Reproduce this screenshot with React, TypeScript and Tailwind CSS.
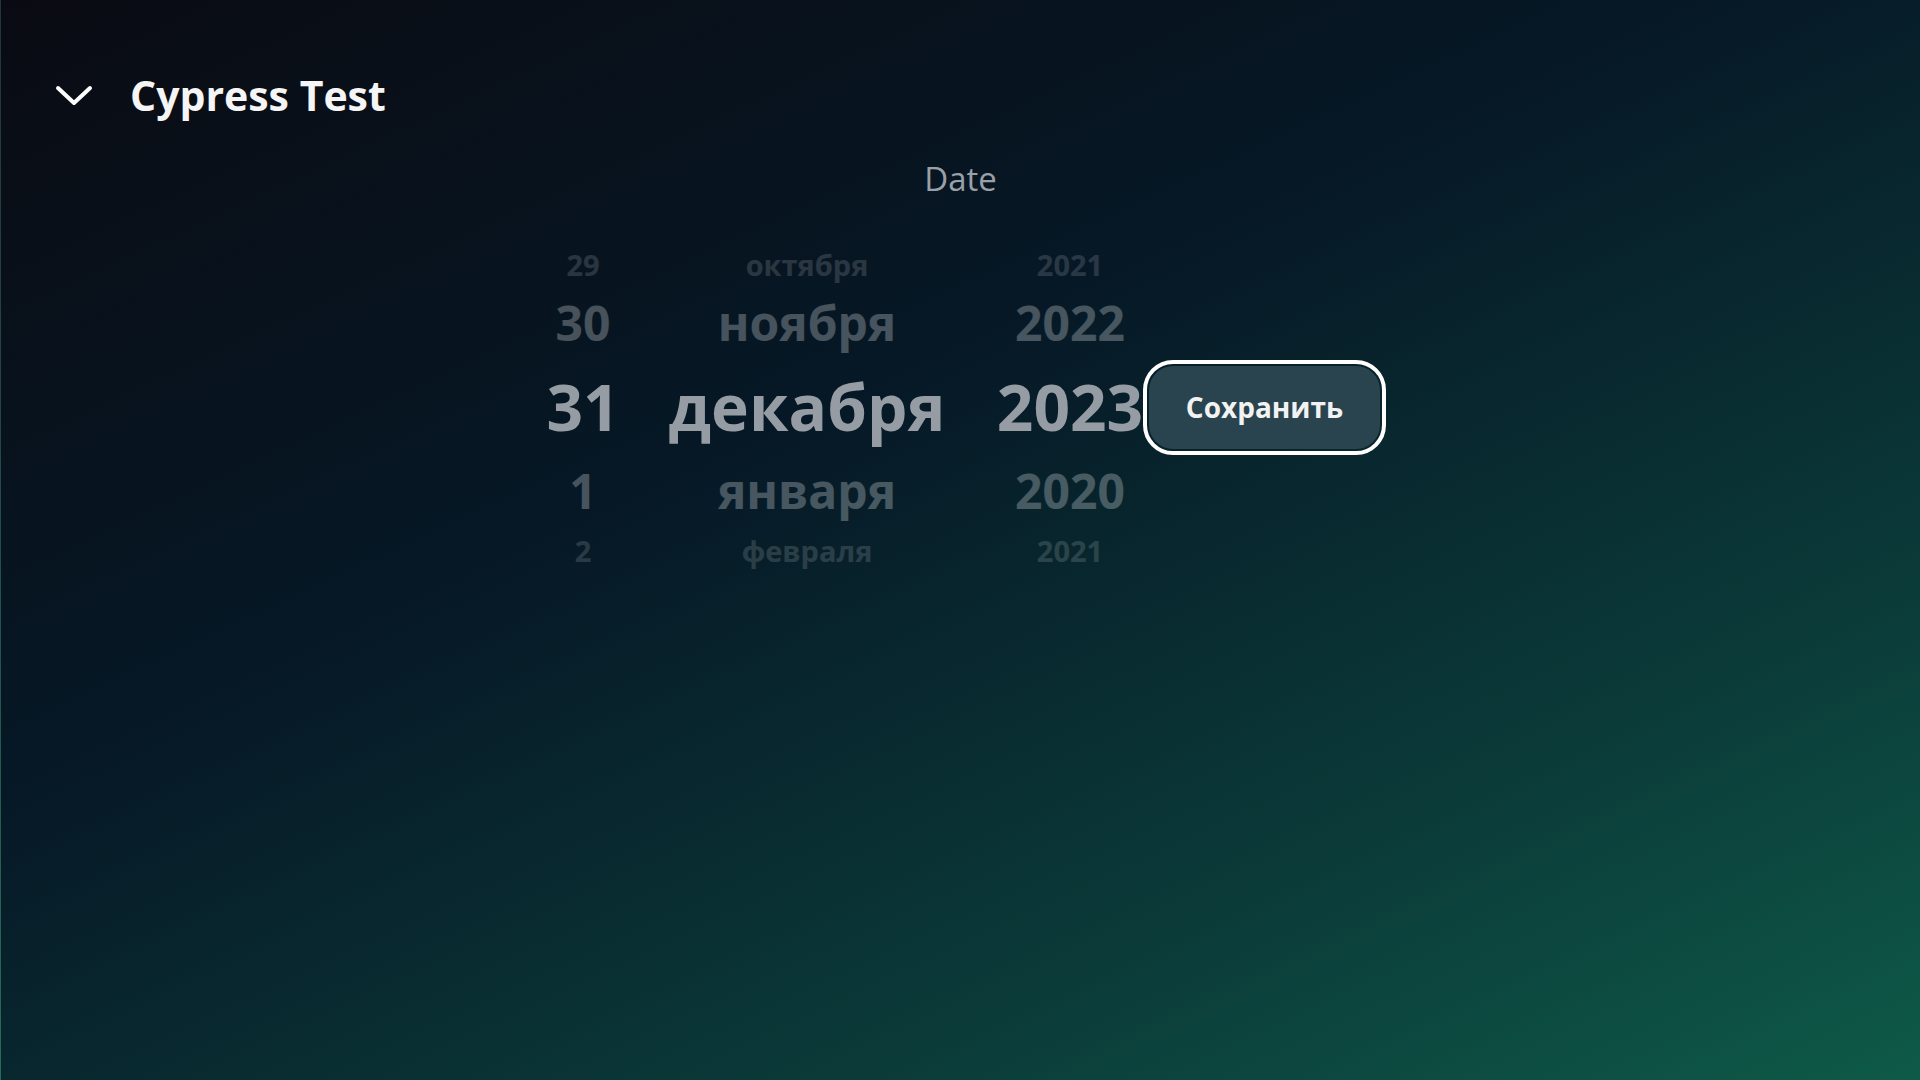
type Row = { day: string; month: string; year: string; tone: "far" | "near" | "active" };

const rows: Row[] = [
  { day: "29", month: "октября", year: "2021", tone: "far" },
  { day: "30", month: "ноября", year: "2022", tone: "near" },
  { day: "31", month: "декабря", year: "2023", tone: "active" },
  { day: "1", month: "января", year: "2020", tone: "near" },
  { day: "2", month: "февраля", year: "2021", tone: "far" },
];

const toneClass = {
  far: "h-[54px] text-[29px] text-white/[0.14]",
  near: "h-[64px] text-[48px] text-white/[0.26]",
  active: "h-[104px] text-[64px] text-[#959ca3]",
};

function PickerColumn({ field, width }: { field: "day" | "month" | "year"; width: string }) {
  return (
    <div className={`flex flex-col ${width}`}>
      {rows.map((row) => (
        <div
          key={row[field] + row.tone + row.month}
          className={`flex items-center justify-center font-bold leading-none whitespace-nowrap ${toneClass[row.tone]}`}
        >
          {row[field]}
        </div>
      ))}
    </div>
  );
}

export default function App() {
  return (
    <div className="min-h-screen w-full border-l border-white/10 bg-[linear-gradient(155deg,#0a0b12_0%,#061826_40%,#0b3b39_75%,#0e5a48_100%)] font-['Open_Sans',sans-serif] text-white">
      {/* Header */}
      <div className="flex items-center pt-[67px] pl-[40px]">
        <svg width="66" height="56" viewBox="0 0 66 56" fill="none" className="shrink-0">
          <polyline
            points="17,21 33,36 49,21"
            stroke="white"
            strokeWidth="4"
            strokeLinecap="round"
            strokeLinejoin="round"
          />
        </svg>
        <h1 className="ml-[23px] text-[41px] font-bold leading-[56px] text-[#f5f5f5]">Cypress Test</h1>
      </div>

      {/* Date picker */}
      <div className="mt-[34px] flex flex-col items-center">
        <div className="text-[33px] leading-[44px] text-[#9aa0a8]">Date</div>
        <div className="mt-[36px] mr-[8px] flex items-center">
          <PickerColumn field="day" width="w-[100px]" />
          <div className="ml-[14px]">
            <PickerColumn field="month" width="w-[320px]" />
          </div>
          <div className="ml-[24px]">
            <PickerColumn field="year" width="w-[158px]" />
          </div>
          <button className="h-[83px] w-[231px] rounded-[24px] bg-[#29444f] text-[28px] font-bold text-[#f2f2f2] outline-4 outline-offset-2 outline-white">
            Сохранить
          </button>
        </div>
      </div>
    </div>
  );
}
